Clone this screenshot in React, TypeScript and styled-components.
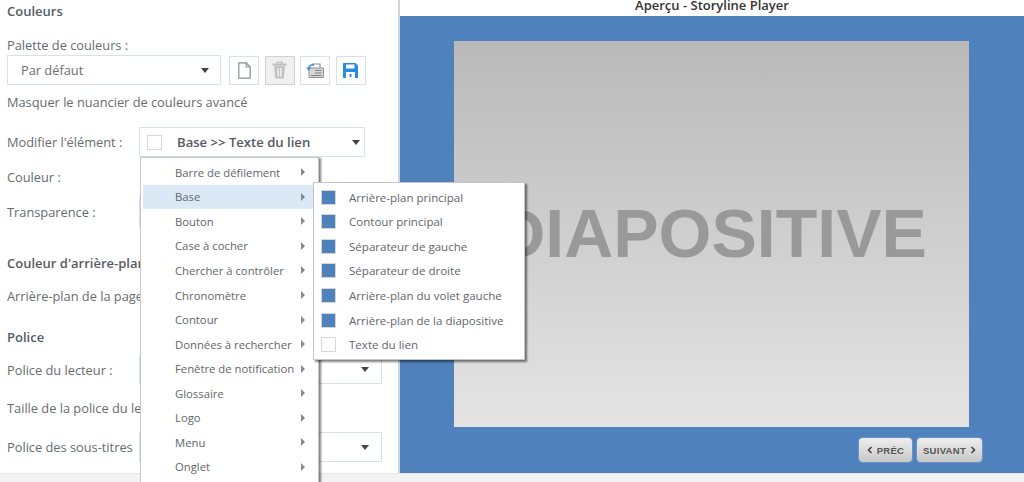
import styled, { createGlobalStyle } from "styled-components";

const GlobalStyle = createGlobalStyle`
  html, body {
    margin: 0;
    padding: 0;
    height: 100%;
    overflow: hidden;
    background: #fff;
    font-family: "Open Sans", "Noto Sans", sans-serif;
  }
  #root { height: 100%; }
`;

const MENU_ITEMS = [
  "Barre de défilement",
  "Base",
  "Bouton",
  "Case à cocher",
  "Chercher à contrôler",
  "Chronomètre",
  "Contour",
  "Données à rechercher",
  "Fenêtre de notification",
  "Glossaire",
  "Logo",
  "Menu",
  "Onglet",
];

const SUB_ITEMS = [
  { label: "Arrière-plan principal", color: "#4f81bd" },
  { label: "Contour principal", color: "#4f81bd" },
  { label: "Séparateur de gauche", color: "#4f81bd" },
  { label: "Séparateur de droite", color: "#4f81bd" },
  { label: "Arrière-plan du volet gauche", color: "#4f81bd" },
  { label: "Arrière-plan de la diapositive", color: "#4f81bd" },
  { label: "Texte du lien", color: "#ffffff" },
];

const Caret = () => (
  <svg width="8" height="5" viewBox="0 0 8 5">
    <path d="M0 0h8L4 5z" fill="#444" />
  </svg>
);

const NewIcon = () => (
  <svg width="13" height="17" viewBox="0 0 13 17" fill="#fff" stroke="#8a8f8f" strokeWidth="1.2">
    <path d="M.8.8h7.400l4 4.200v11.200H.8z" />
    <path d="M8.200.8V5h4" fill="none" />
  </svg>
);

const TrashIcon = () => (
  <svg width="15" height="18" viewBox="0 0 15 18">
    <path d="M.5 3.500h14" stroke="#bcbcbc" strokeWidth="2" />
    <path d="M5 3V1.200h5V3" stroke="#bcbcbc" strokeWidth="1.200" fill="none" />
    <path d="M2 5h11l-1.200 12.500H3.200z" fill="#c2c2c2" />
    <path d="M6 7l.3 8.500M9 7l-.3 8.500" stroke="#f3f3f3" strokeWidth="1.500" />
  </svg>
);

const RestoreIcon = () => (
  <svg width="18" height="15" viewBox="0 0 18 15">
    <path d="M3 5h14.500v9.500H3z" fill="#d8d8d8" stroke="#8f8f8f" />
    <path d="M9 7.500h6.500M9 10h6.500M5 12.500h10.500" stroke="#808080" strokeWidth="1.100" />
    <path d="M6 1h8v3.500" fill="none" stroke="#8f8f8f" strokeWidth="1.200" />
    <path d="M2.500 6C3 3 5 1.500 8 2" fill="none" stroke="#4f94cc" strokeWidth="1.800" />
    <path d="M0 4.500l2.800 3.500 2.400-3.500z" fill="#4f94cc" />
  </svg>
);

const SaveIcon = () => (
  <svg width="15" height="15" viewBox="0 0 15 15">
    <path d="M0 0h12.500L15 2.500V15H0z" fill="#2a8ae2" />
    <path d="M3 1.500h8.500v4H3z" fill="#fff" />
    <path d="M3 9h9v6H3z" fill="#fff" />
    <path d="M6.500 11h2v3h-2z" fill="#2a8ae2" />
  </svg>
);

export default function App() {
  return (
    <>
      <GlobalStyle />
      <Page>
        <Main>
          <LeftPanel>
            <Heading $top={0} $h={22}>Couleurs</Heading>
            <Row $top={13} $h={20}>Palette de couleurs :</Row>
            <Toolbar>
              <Select $width={214} $pad={13} $end={11}>
                <SelectText>Par défaut</SelectText>
                <Caret />
              </Select>
              <ToolGroup>
                <ToolButton><NewIcon /></ToolButton>
                <ToolButton $active><TrashIcon /></ToolButton>
                <ToolButton><RestoreIcon /></ToolButton>
                <ToolButton><SaveIcon /></ToolButton>
              </ToolGroup>
            </Toolbar>
            <Row $top={7} $h={20}>Masquer le nuancier de couleurs avancé</Row>

            <MenuRow $top={15} $h={30}>
              <FieldLabel>Modifier l'élément :</FieldLabel>
              <Select $width={226} $pad={7} $end={4}>
                <Swatch $color="#ffffff" />
                <ElementText>Base &gt;&gt; Texte du lien</ElementText>
                <Caret />
              </Select>
              <Menu>
                {MENU_ITEMS.map((item) => (
                  <MenuItem key={item} $active={item === "Base"}>
                    <span>{item}</span>
                    <MenuArrow />
                  </MenuItem>
                ))}
              </Menu>
              <SubMenu>
                {SUB_ITEMS.map((item) => (
                  <SubMenuItem key={item.label}>
                    <Swatch $color={item.color} />
                    <span>{item.label}</span>
                  </SubMenuItem>
                ))}
              </SubMenu>
            </MenuRow>

            <Row $top={5} $h={30}>Couleur :</Row>
            <FieldRow $top={5} $h={30}>
              <FieldLabel>Transparence :</FieldLabel>
              <Select $width={120} $pad={8} $end={8} />
            </FieldRow>

            <Heading $top={26} $h={20}>Couleur d'arrière-plan</Heading>
            <Row $top={8} $h={30}>Arrière-plan de la page</Row>

            <Heading $top={16} $h={20}>Police</Heading>
            <FieldRow $top={8} $h={29}>
              <FieldLabel>Police du lecteur :</FieldLabel>
              <Select $width={243} $pad={13} $end={12}>
                <span />
                <Caret />
              </Select>
            </FieldRow>
            <Row $top={9} $h={30}>Taille de la police du lecteur</Row>
            <FieldRow $top={9} $h={30}>
              <FieldLabel>Police des sous-titres</FieldLabel>
              <Select $width={243} $pad={13} $end={12}>
                <span />
                <Caret />
              </Select>
            </FieldRow>
          </LeftPanel>

          <RightPanel>
            <PreviewTitle>Aperçu - Storyline Player</PreviewTitle>
            <Stage>
              <Slide>DIAPOSITIVE</Slide>
              <NavRow>
                <NavButton $width={53}>
                  <NavChevron viewBox="0 0 6 8"><path d="M4.500 1L1.500 4l3 3" /></NavChevron>
                  PRÉC
                </NavButton>
                <NavButton $width={65}>
                  SUIVANT
                  <NavChevron viewBox="0 0 6 8"><path d="M1.500 1l3 3-3 3" /></NavChevron>
                </NavButton>
              </NavRow>
            </Stage>
          </RightPanel>
        </Main>
        <Footer />
      </Page>
    </>
  );
}

const Page = styled.div`
  display: flex;
  flex-direction: column;
  width: 1024px;
  height: 482px;
  overflow: hidden;
`;

const Main = styled.div`
  display: flex;
  height: 473px;
  flex: none;
`;

const LeftPanel = styled.div`
  position: relative;
  z-index: 2;
  width: 398px;
  flex: none;
  padding-left: 7px;
  box-sizing: border-box;
  color: #666b70;
  font-size: 12.8px;
`;

const Row = styled.div<{ $top: number; $h: number }>`
  display: flex;
  align-items: center;
  margin-top: ${(p) => p.$top}px;
  height: ${(p) => p.$h}px;
  white-space: nowrap;
`;

const Heading = styled(Row)`
  font-size: 13px;
  font-weight: 600;
  color: #535c64;
`;

const FieldRow = styled(Row)`
  position: relative;
`;

const MenuRow = styled(FieldRow)`
  z-index: 3;
`;

const FieldLabel = styled.div`
  width: 132px;
  flex: none;
  white-space: nowrap;
`;

const Toolbar = styled.div`
  display: flex;
  align-items: center;
  height: 30px;
`;

const ToolGroup = styled.div`
  display: flex;
  gap: 5.670px;
  margin-left: 8px;
`;

const ToolButton = styled.div<{ $active?: boolean }>`
  display: flex;
  align-items: center;
  justify-content: center;
  width: 30px;
  height: 29px;
  box-sizing: border-box;
  border: 1px solid ${(p) => (p.$active ? "#cfcfcf" : "#d9e2e8")};
  background: ${(p) => (p.$active ? "#f0f0f0" : "#fff")};
`;

const Select = styled.div<{ $width: number; $pad: number; $end: number }>`
  display: flex;
  align-items: center;
  justify-content: space-between;
  width: ${(p) => p.$width}px;
  height: 100%;
  flex: none;
  box-sizing: border-box;
  padding: 0 ${(p) => p.$end}px 0 ${(p) => p.$pad}px;
  border: 1px solid #d9e2e8;
  background: #fff;
`;

const SelectText = styled.span`
  color: #6a6e72;
`;

const ElementText = styled.span`
  flex: 1;
  margin-left: 15px;
  font-size: 13.100px;
  font-weight: 600;
  color: #555a5f;
  white-space: nowrap;
`;

const Swatch = styled.span<{ $color: string }>`
  display: block;
  width: 15px;
  height: 15px;
  flex: none;
  box-sizing: border-box;
  background: ${(p) => p.$color};
  border: 1px solid #d6d6d6;
`;

const Menu = styled.div`
  position: absolute;
  left: 133px;
  top: 30px;
  width: 179px;
  box-sizing: border-box;
  padding: 2px 2px 14px;
  background: #fff;
  border: 1px solid #c4c7ca;
  box-shadow: 2px 1px 2px rgba(0, 0, 0, 0.5);
  font-size: 11.300px;
`;

const MenuItem = styled.div<{ $active?: boolean }>`
  display: flex;
  align-items: center;
  justify-content: space-between;
  height: 24.550px;
  padding: 0 11px 0 32px;
  white-space: nowrap;
  color: #62666a;
  background: ${(p) => (p.$active ? "#dbe9f6" : "transparent")};
`;

const MenuArrow = styled.span`
  width: 0;
  height: 0;
  flex: none;
  border-style: solid;
  border-width: 4px 0 4px 4px;
  border-color: transparent transparent transparent #85898c;
`;

const SubMenu = styled.div`
  position: absolute;
  left: 306px;
  top: 55px;
  width: 212px;
  box-sizing: border-box;
  padding: 2px 0;
  background: #fff;
  border: 1px solid #c4c7ca;
  box-shadow: 2px 2px 2px rgba(0, 0, 0, 0.5);
  font-size: 11.550px;
`;

const SubMenuItem = styled.div`
  display: flex;
  align-items: center;
  gap: 13px;
  height: 24.550px;
  padding-left: 7px;
  white-space: nowrap;
  color: #62666a;
`;

const RightPanel = styled.div`
  display: flex;
  flex-direction: column;
  flex: 1;
  border-left: 2px solid #cdd6de;
`;

const PreviewTitle = styled.div`
  height: 16px;
  line-height: 10px;
  flex: none;
  box-sizing: border-box;
  text-align: center;
  font-size: 13px;
  font-weight: 600;
  color: #333;
`;

const Stage = styled.div`
  flex: 1;
  padding: 25px 0 0 54px;
  background: #4f81bd;
`;

const Slide = styled.div`
  display: flex;
  align-items: center;
  justify-content: center;
  width: 515px;
  height: 386px;
  box-sizing: border-box;
  padding-bottom: 3px;
  background: linear-gradient(#b9b9b9, #e4e4e4);
  font-family: "Liberation Sans", Arial, sans-serif;
  font-size: 68px;
  font-weight: 700;
  color: #999999;
  white-space: nowrap;
`;

const NavRow = styled.div`
  display: flex;
  justify-content: flex-end;
  gap: 5px;
  margin-top: 11px;
  padding-right: 42px;
`;

const NavButton = styled.div<{ $width: number }>`
  display: flex;
  align-items: center;
  justify-content: center;
  gap: 4px;
  width: ${(p) => p.$width}px;
  height: 24px;
  border-radius: 4px;
  background: linear-gradient(#eeeeee, #c8c8c8);
  box-shadow: 0 0 2px rgba(255, 255, 255, 0.6);
  font-family: "Liberation Sans", Arial, sans-serif;
  font-size: 9.500px;
  font-weight: 700;
  letter-spacing: 0.3px;
  color: #555;
`;

const NavChevron = styled.svg`
  width: 6px;
  height: 8px;
  fill: none;
  stroke: #444;
  stroke-width: 1.6;
`;

const Footer = styled.div`
  flex: 1;
  box-sizing: border-box;
  background: #f3f3f3;
  border-top: 1px solid #e6e6e6;
`;
